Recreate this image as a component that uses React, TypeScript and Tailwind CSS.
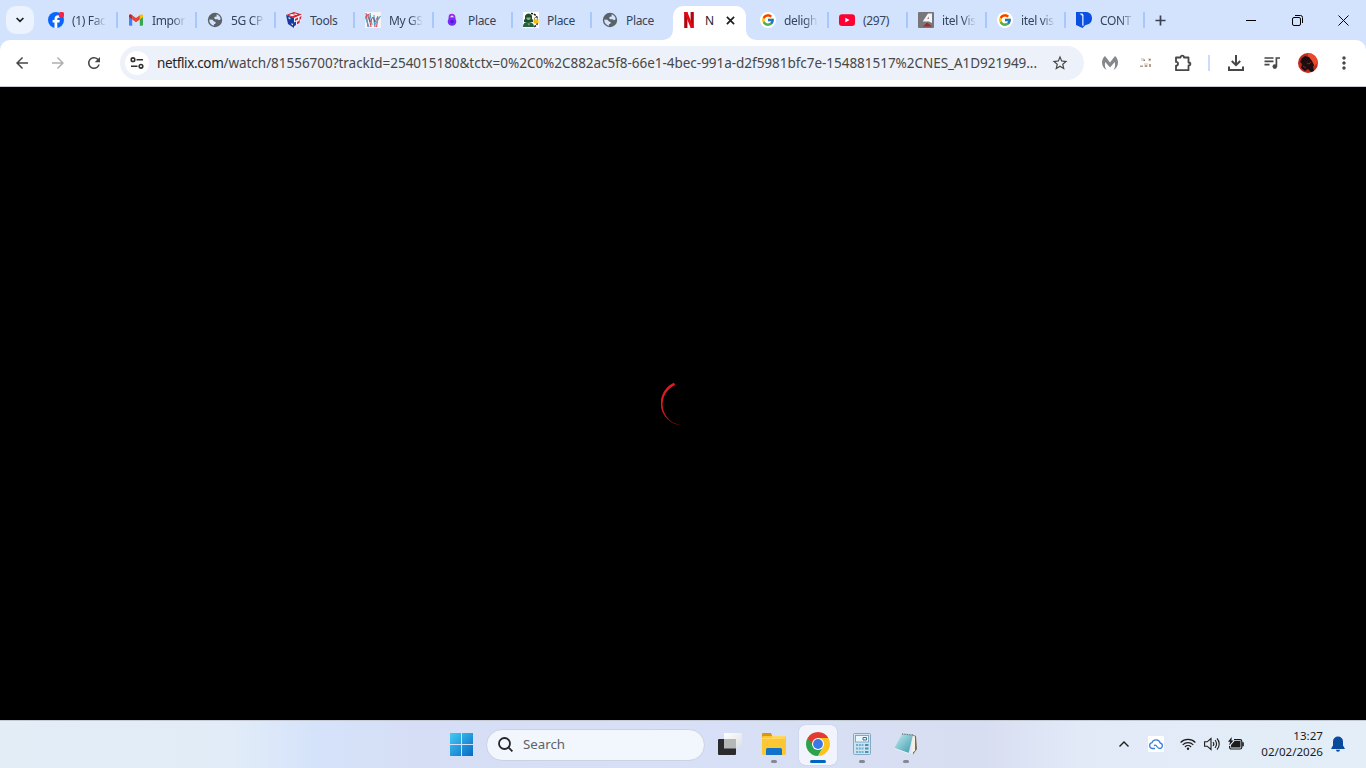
import type { ReactNode } from "react";
import {
  MdArrowBack,
  MdArrowForward,
  MdMoreVert,
  MdRefresh,
  MdStarBorder,
} from "react-icons/md";
import { FcGoogle } from "react-icons/fc";

function FacebookIcon() {
  return (
    <svg viewBox="0 0 16 16" className="size-4">
      <circle cx="8" cy="8" r="8" fill="#0866ff" />
      <path
        d="M6.500 16v-5.400H4.600V8h1.900V7c0-2.500 1.300-3.800 3.700-3.800.5 0 1.100.1 1.500.2v2.300h-1c-1.100 0-1.400.5-1.400 1.400V8h2.500l-.4 2.600H9.300V16z"
        fill="#fff"
      />
      <circle cx="13.500" cy="2.700" r="2.900" fill="#f02849" />
    </svg>
  );
}

function GmailIcon() {
  return (
    <svg viewBox="0 0 16 16" className="size-4">
      <path d="M1 4.500v8.300c0 .5.400.9.900.9h2.300V7.200z" fill="#4285f4" />
      <path d="M11.800 13.700h2.300c.5 0 .9-.4.900-.9V4.500l-3.200 2.700z" fill="#34a853" />
      <path d="M11.800 3.500v3.900L15 5V3.700c0-1.300-1.400-1.900-2.300-1.100z" fill="#fbbc04" />
      <path d="M4.200 7.400V3.200L8 6.100l3.800-2.900v4.200L8 10.300z" fill="#ea4335" />
      <path d="M1 3.700V5l3.200 2.400V3.500l-.9-.9C2.400 1.800 1 2.400 1 3.700z" fill="#c5221f" />
    </svg>
  );
}

function GlobeIcon() {
  return (
    <svg viewBox="0 0 16 16" className="size-4">
      <circle cx="8" cy="8" r="7.200" fill="#5a6268" />
      <path d="M9.500 2.300c2.300.6 4 2.600 4.200 5l-1.700.9-1.500-1H8.200L7 6l1-1.200 1.700-.4z" fill="#d3e3fd" />
      <path d="M2.300 7.500l3.200.3 1.500 1.700 1.700.5-.3 1.700-1.400.5v1.500A5.700 5.700 0 012.300 7.500z" fill="#d3e3fd" />
    </svg>
  );
}

function CubeIcon() {
  return (
    <svg viewBox="0 0 16 16" className="size-4">
      <path d="M0 3l8-3 8 2.500L8 6z" fill="#d8222c" />
      <path d="M3 3l3-1 3 1.200-3 1zM9 1.500l3 .8-2 .8-3-1z" fill="#fff" />
      <path d="M0 3l8 3v10l-6-4z" fill="#1b3b9c" />
      <path d="M16 2.500L8 6v10l6-4z" fill="#e9eefc" />
      <path d="M2.500 5l2 1-.3 1.500-1.700-1zM5.500 11l1.500 1v1.500L5.500 12.500z" fill="#e9eefc" />
      <path d="M9 7l3-1.500v2L9 9zM13.500 5l2-1-.5 3-1.500 1zM11 10l3-2-.5 3L11 12.500z" fill="#d92430" />
      <path d="M8 10.500l2-1v3.500L8 14.500z" fill="#203fa8" />
    </svg>
  );
}

function ScribbleIcon() {
  return (
    <svg viewBox="0 0 16 16" className="size-4" fill="none">
      <path fill="#f8f3f5" d="M0 0h16v16H0z" />
      <path d="M1 1l2 14M3.500 2l2.500 13M9 6l1 9M13 5l-1.500 10" stroke="#dc4f5a" strokeWidth="1.200" />
      <path d="M0 4l4 11M5 1l2 12M9 3l.5 10 6-9" stroke="#55a2cf" strokeWidth="1.200" />
      <path d="M2 2l3 8 3-5 2 5 3-6" stroke="#6a525d" strokeWidth=".8" />
    </svg>
  );
}

function LockIcon() {
  return (
    <svg viewBox="0 0 16 16" className="size-4">
      <path d="M5.500 7V5.200a2.500 2.500 0 015 0V7" stroke="#a226e8" strokeWidth="1.800" fill="none" />
      <circle cx="8" cy="9.500" r="4.300" fill="#7a2af5" />
      <circle cx="8" cy="9.500" r="1.600" fill="#3b1fd1" />
    </svg>
  );
}

function HackerIcon() {
  return (
    <svg viewBox="0 0 16 16" className="size-4">
      <path fill="#fff" d="M0 0h16v16H0z" />
      <path
        d="M8 1.500a6.500 6.500 0 016.500 6M14.500 11a6 6 0 01-4 4"
        stroke="#161616"
        strokeWidth="1.500"
        strokeDasharray="2 1"
        fill="none"
      />
      <path d="M2 4c1-3.500 6-3.500 7 0v3l1 1v2H1V8l1-1z" fill="#1d4f2e" />
      <path d="M0 15c0-4 2-5 5-5s6 1 6 5z" fill="#24633a" />
      <path d="M3.500 5.500h4V7L6 8H5L3.500 7z" fill="#8fb596" />
      <path d="M4.500 11.500h2.500l-1 2z" fill="#8fb596" />
      <path d="M11.500 8V6.800a1.500 1.500 0 013 0V8" stroke="#a27b00" fill="none" />
      <rect x="10.500" y="7.500" width="5" height="4" rx="1" fill="#f2bd18" />
    </svg>
  );
}

function NetflixIcon() {
  return (
    <svg viewBox="0 0 16 16" className="size-4">
      <path d="M3.200 0h3.200v16l-3.200.2zM9.600 0h3.200v16l-3.200-.3z" fill="#b1060f" />
      <path d="M3.200 0h3.200l6.400 16.200-3.200-.4z" fill="#e50914" />
    </svg>
  );
}

function GoogleBadge() {
  return (
    <span className="flex size-4 items-center justify-center rounded-full bg-white">
      <FcGoogle className="size-[14px]" />
    </span>
  );
}

function YouTubeIcon() {
  return (
    <svg viewBox="0 0 16 16" className="size-4">
      <rect y="2.300" width="16" height="11.600" rx="3" fill="#ff0033" />
      <path d="M6.300 5.700v4.800L10.500 8z" fill="#fff" />
    </svg>
  );
}

function ItelIcon() {
  return (
    <svg viewBox="0 0 16 16" className="size-4">
      <rect width="16" height="16" rx="1" fill="#77777b" />
      <path d="M5 9l5-7.500h4V11l-3-1.500H5z" fill="#f4f4f4" />
      <path d="M9 7l2-2.500V7z" fill="#8b8b8f" />
      <path d="M5 14.500l4-4 5 4z" fill="#a32924" />
    </svg>
  );
}

function ContIcon() {
  return (
    <svg viewBox="0 0 16 16" className="size-4">
      <path d="M0 0h9.500C13.700 0 16 2.600 16 6.300c0 3.900-2.600 6.500-6.500 6.700L6.500 16 0 13z" fill="#0b4fe0" />
      <path d="M3.500 1.500h3L7.500 3v11l-1.300-.5V4z" fill="#dce8ff" />
    </svg>
  );
}

type Tab = { title: string; icon: ReactNode; faded?: boolean; active?: boolean; noDivider?: boolean };

const TABS: Tab[] = [
  { title: "(1) Fac", icon: <FacebookIcon />, faded: true },
  { title: "Impor", icon: <GmailIcon />, faded: true },
  { title: "5G CP", icon: <GlobeIcon />, faded: true },
  { title: "Tools", icon: <CubeIcon /> },
  { title: "My GS", icon: <ScribbleIcon />, faded: true },
  { title: "Place", icon: <LockIcon /> },
  { title: "Place", icon: <HackerIcon /> },
  { title: "Place", icon: <GlobeIcon />, noDivider: true },
  { title: "N", icon: <NetflixIcon />, active: true },
  { title: "deligh", icon: <GoogleBadge />, faded: true },
  { title: "(297)", icon: <YouTubeIcon /> },
  { title: "itel Vis", icon: <ItelIcon />, faded: true },
  { title: "itel vis", icon: <GoogleBadge />, faded: true },
  { title: "CONT", icon: <ContIcon />, faded: true },
];

function BrowserTab({ tab }: { tab: Tab }) {
  if (tab.active) {
    return (
      <div className="relative flex h-10 w-[79px] items-center pt-1.5 pr-1 pl-0.5">
        <div className="flex h-full w-[73px] items-center rounded-t-[10px] bg-white pb-1.5 pl-2">
          {tab.icon}
          <span className="ml-2 w-[21px] pt-px text-[12px] text-[#1f1f1f]">{tab.title}</span>
          <svg viewBox="0 0 10 10" className="size-[9px]" stroke="#1f1f1f" strokeWidth="1.900">
            <path d="M1 1l8 8M9 1L1 9" />
          </svg>
        </div>
        <svg viewBox="0 0 10 10" className="absolute bottom-0 -left-2 size-2.5" fill="#fff">
          <path d="M10 0v10H0A10 10 0 0010 0z" />
        </svg>
        <svg viewBox="0 0 10 10" className="absolute -right-1.5 bottom-0 size-2.5" fill="#fff">
          <path d="M0 0v10h10A10 10 0 010 0z" />
        </svg>
      </div>
    );
  }
  return (
    <div className="flex h-10 w-[79px] items-center pl-2.5 first:pl-[9px]">
      <span className="shrink-0">{tab.icon}</span>
      <span
        className={`ml-2 w-[34px] pt-0.5 text-[12px] tracking-[-0.35px] whitespace-nowrap text-[#36445a] ${tab.faded ? "mask-r-from-60% mask-r-to-100%" : ""}`}
      >
        {tab.title}
      </span>
      <span className={`ml-auto h-4 w-0.5 ${tab.noDivider ? "" : "bg-[#a8c7fa]"}`} />
    </div>
  );
}

function TabStrip() {
  return (
    <div className="flex h-10 items-center bg-[#d3e3fd]">
      <button className="ml-1.5 flex size-7 items-center justify-center rounded-[10px] bg-[#ecf3fe]">
        <svg viewBox="0 0 8 6" className="h-1.5 w-2" fill="none" stroke="#1f1f1f" strokeWidth="1.700">
          <path d="M.6 1L4 4.400 7.400 1" />
        </svg>
      </button>
      <div className="ml-[5px] flex">
        {TABS.map((tab, i) => (
          <BrowserTab key={i} tab={tab} />
        ))}
      </div>
      <svg viewBox="0 0 12 12" className="ml-2.5 size-[11px]" stroke="#3c4350" strokeWidth="1.900">
        <path d="M6 .5v11M.5 6h11" />
      </svg>
      <div className="ml-auto flex">
        <span className="flex w-[46px] items-center justify-center">
          <span className="h-px w-2.5 bg-black" />
        </span>
        <span className="flex w-[46px] items-center justify-center">
          <svg viewBox="0 0 11 11" className="size-[11px]" fill="none" stroke="#000">
            <rect x=".5" y="2.500" width="8" height="8" rx="1.500" />
            <path d="M3 .5h5.500a2 2 0 012 2V8" />
          </svg>
        </span>
        <span className="flex w-[46px] items-center justify-center">
          <svg viewBox="0 0 11 11" className="size-[11px]" stroke="#000">
            <path d="M.5.5l10 10M10.500.5l-10 10" />
          </svg>
        </span>
      </div>
    </div>
  );
}

function Slot({ children }: { children: ReactNode }) {
  return <span className="flex w-9 shrink-0 items-center justify-center text-[#474747]">{children}</span>;
}

function Toolbar() {
  return (
    <div className="bg-[#d3e3fd]">
      <div className="flex h-[46px] items-center rounded-t-[10px] bg-white px-1">
        <Slot>
          <MdArrowBack className="size-[18px]" />
        </Slot>
        <Slot>
          <MdArrowForward className="size-[18px] text-[#b0b0b0]" />
        </Slot>
        <Slot>
          <MdRefresh className="size-[18px]" />
        </Slot>
        <div className="ml-2 flex h-[34px] w-[964px] items-center rounded-full bg-[#edf1f9] pl-[5px]">
          <span className="flex size-6 items-center justify-center rounded-full bg-white">
            <svg viewBox="0 0 14 12" className="h-3 w-3.5" fill="none" stroke="#303030" strokeWidth="1.600">
              <circle cx="3" cy="2.700" r="1.800" />
              <path d="M6.500 2.700H13M1 9.300h6.500" />
              <circle cx="11" cy="9.300" r="1.800" />
            </svg>
          </span>
          <span className="ml-2 w-[886px] text-[13.5px] tracking-[-0.03px] whitespace-nowrap text-[#474747]">
            <span className="tracking-[-0.37px] text-[#1f1f1f]">netflix.com</span>
            /watch/81556700?trackId=254015180&amp;tctx=0%2C0%2C882ac5f8-66e1-4bec-991a-d2f5981bfc7e-154881517%2CNES_A1D921949...
          </span>
          <MdStarBorder className="ml-2 size-[18px] text-[#474747]" />
        </div>
        <div className="ml-2 flex items-center">
          <Slot>
            <svg viewBox="0 0 16 14" className="h-3.5 w-4" fill="#85888a">
              <path d="M3 0l5 6.500L13 0c2 1.500 3 4 3 6.500 0 3.500-2 6-4.500 7.500 1.500-2 2-5 1.300-8L8 11.500 3.200 6c-.7 3-.2 6 1.300 8C2 12.500 0 10 0 6.500 0 4 1 1.500 3 0z" />
            </svg>
          </Slot>
          <Slot>
            <svg viewBox="0 0 12 10" className="h-2.5 w-3">
              <path d="M1 0h3v3H1zM8 0h3v3H8zM4 5h4v4H4z" fill="#e6ddd7" />
              <path d="M3.500 1.500H5V3H3.500zM9 1h1.500v1.500H9z" fill="#8d7468" />
              <path d="M0 7.500h3V9H0zM5 7h2v2H5zM9 6h2v3H9z" fill="#b59f92" />
            </svg>
          </Slot>
          <span className="flex w-[37px] items-center justify-center">
            <svg viewBox="0 0 18 18" className="size-[18px]" fill="none" stroke="#474747" strokeWidth="1.800">
              <path
                d="M2 3.500h4.500c0-2.500 3.500-2.500 3.500 0h4.500v5c2.500 0 2.500 3 0 3v4.700H2v-4.500c2.700 0 2.700-3.800 0-3.800z"
                strokeLinejoin="round"
              />
            </svg>
          </span>
          <span className="mr-2 ml-[7px] h-4 w-0.5 bg-[#c9defb]" />
          <Slot>
            <svg viewBox="0 0 18 18" className="size-[18px]" fill="none" stroke="#474747" strokeWidth="2">
              <path d="M9 1v10M4.800 7L9 11.200 13.200 7M2 12.500V16h14v-3.500" />
            </svg>
          </Slot>
          <Slot>
            <svg viewBox="0 0 16 14" className="h-3.5 w-4" fill="none" stroke="#474747" strokeWidth="1.700">
              <path d="M.5 2h9M.5 5.300h9M.5 8.600h5M12.400 10.500V2H16" />
              <circle cx="10.800" cy="10.600" r="2.300" fill="#474747" stroke="none" />
            </svg>
          </Slot>
          <Slot>
            <svg viewBox="0 0 20 20" className="size-5">
              <circle cx="10" cy="10" r="10" fill="#c5281d" />
              <path d="M10 0a10 10 0 0110 10l-4 3-6-7z" fill="#e6492b" />
              <path d="M4 5l3-2 4 1 3 4 2 4-1 2 1 4-3 1-3-3-3 2-4-3 1-4-2-2z" fill="#1c0e10" />
              <path d="M9 10l2 1 2-2M5 13l3 2" stroke="#8c2119" fill="none" />
            </svg>
          </Slot>
          <Slot>
            <MdMoreVert className="size-5" />
          </Slot>
        </div>
      </div>
    </div>
  );
}

function Player() {
  return (
    <main className="flex h-[634px] items-center justify-center border-t border-[#c8ccd2] bg-black">
      <svg viewBox="0 0 44 44" className="mb-0.5 size-11">
        <defs>
          <linearGradient id="spin" x1="14" y1="2" x2="30" y2="44" gradientUnits="userSpaceOnUse">
            <stop stopColor="#e01b22" />
            <stop offset=".65" stopColor="#c9161c" />
            <stop offset="1" stopColor="#7a0a0f" />
          </linearGradient>
        </defs>
        <path d="M12.900 1.800A22 22 0 0031 42.500 20.900 20.900 0 0114.200 4z" fill="url(#spin)" />
      </svg>
    </main>
  );
}

function TaskButton({ children, running, active }: { children: ReactNode; running?: boolean; active?: boolean }) {
  return (
    <span className="flex w-11 justify-center">
      <span
        className={`flex h-10 w-[38px] flex-col items-center rounded-md pt-[7px] ${active ? "bg-[#f1f4fc] shadow-[0_0_1px_#9aa6c0]" : ""}`}
      >
        {children}
        {running && !active && <span className="mt-1 h-[3px] w-1.5 rounded-full bg-[#85898f]" />}
        {active && <span className="mt-1 h-[3px] w-4 rounded-full bg-[#0067c0]" />}
      </span>
    </span>
  );
}

function Taskbar() {
  return (
    <footer className="flex h-12 items-center border-t border-[#c5cbd6] bg-[linear-gradient(90deg,#e2edf6_0%,#e2ecf8_17%,#d5e3fa_23%,#d6def5_30%,#d7e0f7_50%,#d8def1_72%,#e2eaf8_79%,#e3eef7_100%)]">
      <div className="flex w-[486px] justify-end">
        <svg viewBox="0 0 23 23" className="mr-[13px] size-[23px]">
          <defs>
            <linearGradient id="win" x1="0" y1="0" x2="23" y2="23" gradientUnits="userSpaceOnUse">
              <stop stopColor="#45cbf5" />
              <stop offset="1" stopColor="#0569c4" />
            </linearGradient>
          </defs>
          <path d="M0 0h11v11H0zM12 0h11v11H12zM0 12h11v11H0zM12 12h11v11H12z" fill="url(#win)" />
        </svg>
      </div>
      <div className="flex w-[442px] items-center">
        <div className="mr-[3px] flex h-8 w-[219px] items-center rounded-full border border-[#cbd2e3] bg-[#f2f6fd] pl-[11px]">
          <svg viewBox="0 0 15 15" className="size-[15px]" fill="none" stroke="#24262b" strokeWidth="1.800">
            <circle cx="6.500" cy="6.500" r="5.500" />
            <path d="M10.400 10.400l4 4" />
          </svg>
          <span className="ml-2.5 text-[13.3px] text-[#5f6268]">Search</span>
        </div>
        <TaskButton>
          <svg viewBox="0 0 24 24" className="size-6">
            <defs>
              <linearGradient id="view" x1="0" y1="0" x2="1" y2="1">
                <stop stopColor="#fff" />
                <stop offset="1" stopColor="#dcdfe2" />
              </linearGradient>
            </defs>
            <rect x="6" y="1" width="18" height="15" rx="1" fill="url(#view)" />
            <rect y="7" width="18" height="16" rx="1" fill="#2b2b2e" />
            <path d="M6 7h12v9.500H6z" fill="#b6b7b9" />
          </svg>
        </TaskButton>
        <TaskButton running>
          <svg viewBox="0 0 24 24" className="size-6">
            <path d="M0 2a1 1 0 011-1h8l1 2.500V9H0z" fill="#d9960f" />
            <rect y="4" width="24" height="19" rx="1.500" fill="#fcc734" />
            <path d="M0 6h9l2-2h12v3H0z" fill="#ffd75e" />
            <path d="M4 23v-5.500A1.500 1.500 0 015.500 16h13a1.500 1.500 0 011.500 1.500V23z" fill="#1173c7" />
          </svg>
        </TaskButton>
        <TaskButton active>
          <svg viewBox="0 0 24 24" className="size-6">
            <path d="M12 12L1.610 6A12 12 0 0122.390 6z" fill="#e33b2e" />
            <path d="M12 12L1.610 6A12 12 0 0012 24l5.200-9z" fill="#2ba24c" />
            <path d="M12 6h10.390A12 12 0 0112 24l5.200-9z" fill="#fcc31e" />
            <path d="M1.610 6L6.800 15 12 12V6z" fill="#2ba24c" />
            <path d="M1.610 6L6 12l6-6z" fill="#e33b2e" />
            <circle cx="12" cy="12" r="6" fill="#fff" />
            <circle cx="12" cy="12" r="4.900" fill="#3b78e7" />
          </svg>
        </TaskButton>
        <TaskButton running>
          <svg viewBox="0 0 24 24" className="size-6">
            <rect x="3.500" y="1.500" width="17" height="21" rx="1" fill="#cfe3ee" stroke="#86a9bd" />
            <rect x="5.500" y="3.500" width="13" height="6.500" fill="#eaf7fc" stroke="#7eaac4" />
            <path d="M13 8V5.500h3.500V8z" fill="none" stroke="#47718c" />
            <path d="M6 13h7.500M6 16.500h7.500M6 20h7.500" stroke="#6fb0d6" strokeWidth="2" strokeDasharray="2 .8" />
            <path d="M15 13h3.500M15 16.500h3.500M15 20h3.500" stroke="#3f95c2" strokeWidth="2" />
          </svg>
        </TaskButton>
        <TaskButton running>
          <svg viewBox="0 0 24 24" className="size-6">
            <defs>
              <linearGradient id="note" x1="0" y1="0" x2="1" y2="1">
                <stop stopColor="#c7eef3" />
                <stop offset="1" stopColor="#3a98ab" />
              </linearGradient>
            </defs>
            <path d="M18 2.500l4 1.500 1 13-4 5.500z" fill="#7b6753" />
            <path d="M18 3l3 1.500 0 14-4 4z" fill="#f3efe2" />
            <path d="M8 2l11 1-4.500 18L.5 16z" fill="url(#note)" />
            <path d="M8 2l11 1" stroke="#6d7a7c" strokeWidth="1.300" strokeDasharray="1 .7" />
            <path d="M.5 16.500l14 5 4-3" stroke="#e4f0f0" fill="none" />
          </svg>
        </TaskButton>
      </div>
      <div className="flex flex-1 items-center justify-end text-[#1b1b1b]">
        <svg viewBox="0 0 10 6" className="mr-[19px] mb-0.5 h-1.5 w-2.5" fill="none" stroke="currentColor" strokeWidth="1.400">
          <path d="M.5 5.500L5 1l4.500 4.500" />
        </svg>
        <svg viewBox="0 0 16 16" className="mr-4 mb-0.5 size-4" fill="none">
          <path fill="#fff" d="M0 0h16v16H0z" />
          <path
            d="M7 12.500H4.300a3 3 0 01-.3-5.900A4.300 4.300 0 0112.200 7a2.800 2.800 0 01-.2 5.500c-2 0-2.700-1.300-3.500-2.500S6.500 9 6.300 10"
            stroke="#3a80e0"
            strokeWidth="1.300"
          />
        </svg>
        <svg viewBox="0 0 16 12" className="mr-2 mb-0.5 h-3 w-4" fill="none" stroke="currentColor" strokeWidth="1.200">
          <path d="M.6 4.500a10.500 10.500 0 0114.800 0M2.700 6.800a7.500 7.500 0 0110.600 0M4.900 9a4.400 4.400 0 016.200 0" />
          <circle cx="8" cy="10.700" r="1.200" fill="currentColor" stroke="none" />
        </svg>
        <svg viewBox="0 0 16 14" className="mr-2 mb-0.5 h-3.5 w-4" fill="none" stroke="currentColor" strokeWidth="1.100">
          <path d="M.6 4.800h2.600L7 1.500v11L3.200 9.200H.6zM9 5a3 3 0 010 4M11 3.200a5.500 5.500 0 010 7.600M13 1.500a8 8 0 010 11" />
        </svg>
        <svg viewBox="0 0 16 14" className="mr-[17px] mb-0.5 h-3.5 w-4" fill="none" stroke="currentColor">
          <path d="M6 2.600h6a1.800 1.800 0 011.800 1.800v5.800A1.800 1.800 0 0112 12H3.400a1.800 1.800 0 01-1.800-1.800V9" strokeWidth="1.200" />
          <path d="M3 10.500V8l3.500-4h6v6.500z" fill="currentColor" stroke="none" />
          <path d="M14.200 5.300h1.600v4h-1.600z" fill="currentColor" stroke="none" />
          <path d="M3.700 0L0 4.700h2L1.200 8.500l4.300-5H3.500z" fill="currentColor" stroke="none" />
        </svg>
        <div className="mb-0.5 text-right text-[11.6px] leading-4">
          <div>13:27</div>
          <div>02/02/2026</div>
        </div>
        <svg viewBox="0 0 14 16" className="mr-[21px] mb-0.5 ml-2 h-4 w-3.5" fill="#0a4a9c">
          <path d="M7 .5a5 5 0 015 5v4l1.700 2.700v.8H.3v-.8L2 9.500v-4a5 5 0 015-5zM5 13.800h4a2 2 0 01-4 0z" />
        </svg>
      </div>
    </footer>
  );
}

export default function App() {
  return (
    <div className="flex h-[768px] w-[1366px] flex-col overflow-hidden font-['Noto_Sans','Open_Sans',sans-serif]">
      <TabStrip />
      <Toolbar />
      <Player />
      <Taskbar />
    </div>
  );
}
